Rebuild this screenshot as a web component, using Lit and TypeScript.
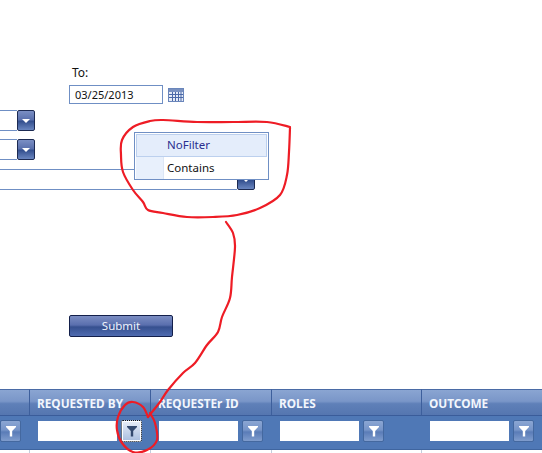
import { LitElement, html, css, svg } from "lit";
import { customElement } from "lit/decorators.js";

type P = [number, number];
const smooth = (p: P[]) => {
  let d = `M${p[0][0]} ${p[0][1]}`;
  for (let i = 0; i < p.length - 1; i++) {
    const a = p[Math.max(i - 1, 0)], b = p[i], c = p[i + 1], e = p[Math.min(i + 2, p.length - 1)];
    d += ` C${b[0] + (c[0] - a[0]) / 6} ${b[1] + (c[1] - a[1]) / 6} ${c[0] - (e[0] - b[0]) / 6} ${c[1] - (e[1] - b[1]) / 6} ${c[0]} ${c[1]}`;
  }
  return d;
};

const loop: P[] = [[290,127],[267,122],[233,122],[197,122],[163,120],[150,121],[133,127],[122,140],[121,155],[123,172],[133,190],[143,202],[148,210],[163,213],[187,217],[213,217],[237,215],[260,208],[280,195],[287,175],[289,152],[290,128]];
const tail: P[] = [[226,222],[233,233],[235,247],[232,277],[230,298],[222,317],[218,332],[207,345],[195,363],[183,373],[168,390],[160,402],[148,417]];
const ring: P[] = [[148,417],[143,407],[133,402],[125,405],[118,417],[117,430],[122,443],[133,452],[147,450],[157,440],[155,423],[150,413]];

const funnel = (c: string) => svg`<svg width="10" height="11" viewBox="0 0 10 11"><path d="M0 0h10v1L6.2 5V10.5H3.8V5L0 1z" fill="${c}"/></svg>`;

const columns = ["", "REQUESTED BY", "REQUESTEr ID", "ROLES", "OUTCOME"];

@customElement("app-root")
export class AppRoot extends LitElement {
  static styles = css`
    :host { display: block; position: relative; width: 542px; height: 453px; overflow: hidden; background: #fff; font-family: "Noto Sans", sans-serif; font-size: 11.5px; color: #111; }
    .form { height: 389px; box-sizing: border-box; padding-top: 64px; display: flex; flex-direction: column; }
    .to { margin-left: 72px; height: 21px; line-height: 18px; font-size: 12px; }
    .date-row { display: flex; align-items: center; gap: 5px; margin-left: 69px; height: 19px; }
    .date { box-sizing: border-box; width: 94px; height: 19px; border: 1px solid #6f8fc4; padding-left: 5px; line-height: 17px; font-size: 11px; }
    .cal { margin-top: 1px; }
    .combo { display: flex; margin-top: 8px; height: 21px; }
    .combo.first { margin-top: 6px; }
    .combo.long { margin-top: 9px; }
    .combo-field { box-sizing: border-box; height: 21px; border: 1px solid #6f8fc4; border-left: none; border-right: none; width: 17px; }
    .long .combo-field { width: 237px; }
    .combo-btn { box-sizing: border-box; width: 18px; height: 21px; border: 1px solid #1c2a52; border-radius: 2px; display: flex; align-items: center; justify-content: center; background: linear-gradient(#7b8fc4 0%, #5a70ad 45%, #34508f 55%, #6a86c0 100%); }
    .arrow { width: 0; height: 0; border: 4px solid transparent; border-top: 4px solid #fff; border-bottom: none; }
    .submit { box-sizing: border-box; margin: 125px 0 0 69px; width: 104px; height: 22px; border: 1px solid #131f4a; border-radius: 2px; color: #eef2fc; text-align: center; line-height: 20px; background: linear-gradient(#7b8dc2 0%, #5a6fae 45%, #36508f 55%, #4f6bb0 100%); }
    .grid { display: grid; grid-template-columns: 29px 121px 121px 150px 121px; height: 64px; }
    .head { box-sizing: border-box; height: 27px; border-top: 1px solid #4a6ba6; border-left: 1px solid #3d5f9c; border-bottom: 1px solid #3a5c9a; padding-left: 7px; color: #f2f6fd; font-weight: 700; font-size: 11.8px; line-height: 26px; white-space: nowrap; background: linear-gradient(#8aa5d2 0%, #7a96c8 45%, #5f80b8 55%, #5576b0 100%); }
    .head:first-child { border-left: none; }
    .filter { box-sizing: border-box; height: 34px; background: #4f78b6; border-bottom: 1px solid #3f659f; padding: 5px 0 0 9px; display: flex; gap: 4px; }
    .filter.lead { padding-left: 0; }
    .box { width: 79px; height: 20px; background: #fff; }
    .fbtn { box-sizing: border-box; width: 21px; height: 22px; margin-top: -1px; border: 1px solid #44689f; border-radius: 2px; display: flex; align-items: center; justify-content: center; background: linear-gradient(#8ba6d3 0%, #7694c8 45%, #5a7cb7 55%, #7f9ccd 100%); }
    .fbtn.focus { border: 1px dotted #111; outline: 1px solid #fff; outline-offset: -2px; background: linear-gradient(#e8eef8, #a9bedf); }
    .foot { height: 3px; border-left: 1px solid #c3cede; }
    .foot:nth-child(11) { border-left: none; }
    .popup { position: absolute; left: 134px; top: 132px; box-sizing: border-box; width: 135px; height: 48px; background: #fff; border: 1px solid #6f8fc4; padding: 1px; }
    .item { height: 22px; display: flex; line-height: 22px; }
    .item.sel { box-sizing: border-box; height: 23px; background: #e4edfb; border: 1px solid #bcd0ee; color: #2a2f8f; line-height: 20px; }
    .gutter { width: 27px; flex: none; }
    .item:not(.sel) .gutter { box-sizing: border-box; width: 28px; background: #e8f0fc; border-right: 1px solid #dce6f5; }
    .text { padding-left: 3px; }
    .ink { position: absolute; inset: 0; width: 542px; height: 453px; pointer-events: none; }
    .ink path { fill: none; stroke: #ee1c25; stroke-width: 2.2; stroke-linecap: round; stroke-linejoin: round; }
  `;

  private filterCell(i: number) {
    if (i === 0) return html`<div class="filter lead"><div class="fbtn">${funnel("#fff")}</div></div>`;
    return html`<div class="filter">
      <div class="box"></div>
      <div class="fbtn ${i === 1 ? "focus" : ""}">${funnel(i === 1 ? "#33496e" : "#fff")}</div>
    </div>`;
  }

  render() {
    return html`
      <div class="form">
        <div class="to">To:</div>
        <div class="date-row">
          <div class="date">03/25/2013</div>
          <svg class="cal" width="16" height="14" viewBox="0 0 16 14">
            <rect x=".5" y=".5" width="15" height="13" fill="#e4eaf6" stroke="#6a86bb"/>
            <rect x="1" y="1" width="14" height="3" fill="#7890c0"/>
            <path d="M4.5 4v9M7.5 4v9M10.5 4v9M13 4v9M1 6.5h14M1 9.5h14" stroke="#4a68a8" fill="none"/>
          </svg>
        </div>
        <div class="combo first"><div class="combo-field"></div><div class="combo-btn"><div class="arrow"></div></div></div>
        <div class="combo"><div class="combo-field"></div><div class="combo-btn"><div class="arrow"></div></div></div>
        <div class="combo long"><div class="combo-field"></div><div class="combo-btn"><div class="arrow"></div></div></div>
        <div class="submit">Submit</div>
      </div>
      <div class="grid">
        ${columns.map((c) => html`<div class="head">${c}</div>`)}
        ${columns.map((_, i) => this.filterCell(i))}
        <div class="foot"></div><div class="foot"></div><div class="foot"></div><div class="foot"></div><div class="foot"></div>
      </div>
      <div class="popup">
        <div class="item sel"><div class="gutter"></div><div class="text">NoFilter</div></div>
        <div class="item"><div class="gutter"></div><div class="text">Contains</div></div>
      </div>
      <svg class="ink" viewBox="0 0 542 453">
        <path d="${smooth(loop)}"/>
        <path d="${smooth(tail)}"/>
        <path d="${smooth(ring)}"/>
      </svg>
    `;
  }
}
